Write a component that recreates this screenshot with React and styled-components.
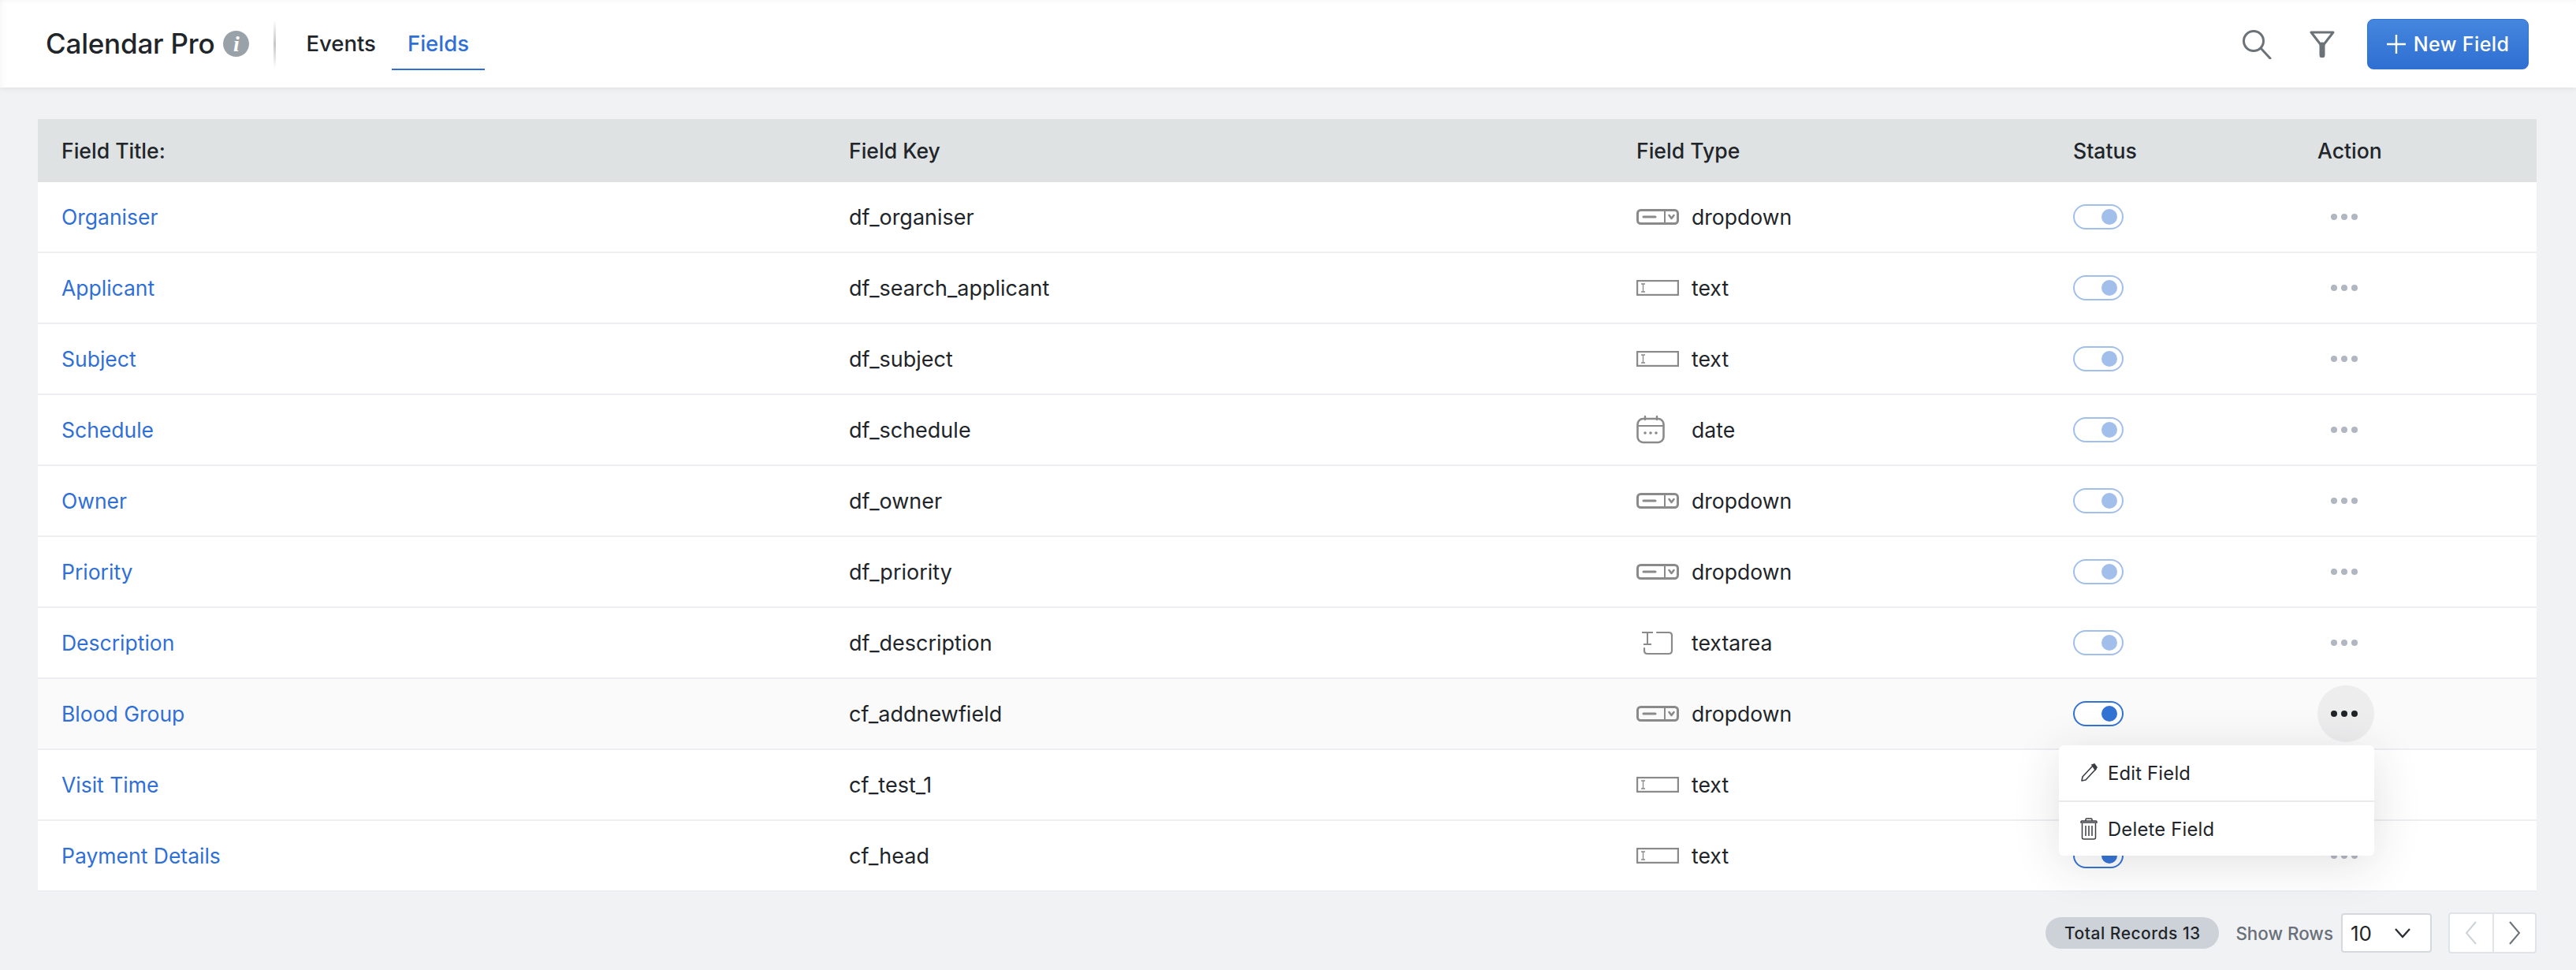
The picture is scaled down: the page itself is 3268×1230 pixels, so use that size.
import * as React from "react";
import styled, { createGlobalStyle } from "styled-components";

const GlobalStyle = createGlobalStyle`
  html, body {
    margin: 0;
    padding: 0;
    background: #f1f2f4;
  }
  body {
    font-family: Inter, "Noto Sans", "Liberation Sans", sans-serif;
    color: #212529;
  }
`;

const Page = styled.div`
  width: 3268px;
  height: 1230px;
  overflow: hidden;
  background: #f1f2f4;
`;

const TopBar = styled.header`
  height: 111px;
  box-sizing: border-box;
  display: flex;
  align-items: center;
  padding: 0 60px 0 58px;
  background: #fff;
  box-shadow: 0 2px 6px rgba(0, 0, 0, 0.07),
    inset 0 8px 8px -8px rgba(0, 0, 0, 0.05),
    inset 12px 0 12px -12px rgba(0, 0, 0, 0.05);
`;

const Title = styled.h1`
  margin: 0;
  font-size: 35px;
  font-weight: 500;
  letter-spacing: -0.2px;
  line-height: 1;
`;

const InfoIcon = styled.span`
  width: 33px;
  height: 33px;
  margin-left: 11px;
  border-radius: 50%;
  background: #99a2a8;
  color: #fff;
  display: flex;
  align-items: center;
  justify-content: center;
  font-family: "Liberation Serif", serif;
  font-style: italic;
  font-weight: 700;
  font-size: 28px;
`;

const Divider = styled.span`
  width: 3px;
  height: 62px;
  margin: 0 18px 0 31px;
  background: linear-gradient(to bottom, #fff, #c4c7c9 50%, #fff);
`;

const Tab = styled.a`
  height: 66px;
  box-sizing: border-box;
  padding: 19px 20px 0;
  display: flex;
  align-items: flex-start;
  font-size: 27.5px;
  font-weight: 500;
  line-height: 1;
  color: ${(p) => (p.$active ? "#2f6fd6" : "#212529")};
  border-bottom: 2px solid ${(p) => (p.$active ? "#2f6fd6" : "transparent")};
`;

const Spacer = styled.div`
  flex: 1;
`;

const ToolIcon = styled.svg`
  display: block;
  margin-right: ${(p) => p.$gap}px;
`;

const NewButton = styled.button`
  width: 205px;
  height: 64px;
  box-sizing: border-box;
  border: 1px solid #3373d4;
  border-radius: 8px;
  background: linear-gradient(to bottom, #4586de, #2f6fd2);
  color: #fff;
  font-family: inherit;
  font-size: 25px;
  font-weight: 500;
  letter-spacing: 0.4px;
  display: flex;
  align-items: center;
  justify-content: center;
  gap: 10px;
  padding: 0;
`;

const Content = styled.main`
  padding: 40px 50px 0 48px;
`;

const Columns = styled.div`
  display: grid;
  grid-template-columns: 1029px 999px 554px 310px 278px;
  align-items: center;
`;

const HeadRow = styled(Columns)`
  height: 80px;
  background: #dfe2e3;
  font-size: 26.6px;
  font-weight: 500;
`;

const HeadCell = styled.div`
  padding-left: ${(p) => (p.$first ? "30px" : "0")};
`;

const Row = styled(Columns)`
  height: 90px;
  box-sizing: border-box;
  border-bottom: 2px solid #eceef2;
  background: ${(p) => (p.$hover ? "#fafafa" : "#fff")};
  font-size: 27px;
  &:last-child {
    border-bottom: 0;
  }
`;

const TitleLink = styled.a`
  padding-left: 30px;
  font-size: 26.5px;
  color: #2f6fd6;
`;

const TypeCell = styled.div`
  display: flex;
  align-items: center;
  font-size: 26.6px;
`;

const TypeIconBox = styled.div`
  width: 70px;
  height: 40px;
  display: flex;
  align-items: center;
  flex: none;
`;

const Toggle = styled.div`
  width: 64px;
  height: 32px;
  box-sizing: border-box;
  border: 2px solid #3373d4;
  border-radius: 16px;
  background: #fff;
  display: flex;
  align-items: center;
  justify-content: flex-end;
  padding-right: 6px;
  opacity: ${(p) => (p.$on ? 1 : 0.45)};
  &::after {
    content: "";
    width: 20px;
    height: 20px;
    border-radius: 50%;
    background: #3373d4;
  }
`;

const ActionCell = styled.div`
  position: relative;
  height: 72px;
  display: flex;
  align-items: center;
`;

const MoreButton = styled.div`
  width: 72px;
  height: 72px;
  border-radius: 50%;
  display: flex;
  align-items: center;
  justify-content: center;
  gap: 5px;
  background: ${(p) => (p.$open ? "#ededee" : "transparent")};
  padding-right: 5px;
  box-sizing: border-box;
`;

const Dot = styled.span`
  width: 8px;
  height: 8px;
  border-radius: 50%;
  background: ${(p) => (p.$open ? "#212529" : "#b1b7c1")};
`;

const Menu = styled.div`
  position: absolute;
  z-index: 2;
  top: 76px;
  right: 206px;
  width: 400px;
  height: 140px;
  background: #fff;
  border-radius: 6px;
  box-shadow: 0 10px 60px rgba(40, 45, 60, 0.14);
  display: grid;
  grid-template-rows: 70px 70px;
`;

const MenuItem = styled.div`
  display: flex;
  align-items: center;
  gap: 13px;
  padding-left: 27px;
  font-size: 23.8px;
  letter-spacing: 0.2px;
  border-top: ${(p) => (p.$split ? "2px solid #e9eaec" : "0")};
`;

const Footer = styled.footer`
  margin-top: 26px;
  display: flex;
  align-items: center;
  justify-content: flex-end;
`;

const TotalPill = styled.div`
  width: 220px;
  height: 40px;
  margin-right: 21px;
  border-radius: 20px;
  background: #cdd2d8;
  display: flex;
  align-items: center;
  justify-content: center;
  font-size: 21px;
  font-weight: 500;
  letter-spacing: 0.5px;
`;

const RowsLabel = styled.div`
  margin-right: 10px;
  color: #697079;
  font-size: 22.4px;
  font-weight: 500;
`;

const RowsSelect = styled.div`
  width: 115px;
  height: 50px;
  box-sizing: border-box;
  margin-right: 21px;
  padding: 0 24px 0 10px;
  border: 2px solid #d5d9de;
  border-radius: 4px;
  background: #fff;
  display: flex;
  align-items: center;
  justify-content: space-between;
  font-size: 26px;
`;

const Pager = styled.div`
  width: 112px;
  height: 52px;
  box-sizing: border-box;
  border: 2px solid #e0e3e7;
  border-radius: 4px;
  background: #fff;
  display: grid;
  grid-template-columns: 1fr 1fr;
`;

const PagerCell = styled.div`
  display: flex;
  align-items: center;
  justify-content: center;
  border-left: ${(p) => (p.$split ? "2px solid #e0e3e7" : "0")};
`;

function SearchIcon() {
  return (
    <ToolIcon $gap={48} width="38" height="38" viewBox="0 0 38 38" fill="none" stroke="#6b7278" strokeWidth="3">
      <circle cx="15" cy="15" r="12.5" />
      <path d="M24 24 L36 37" strokeLinecap="round" />
    </ToolIcon>
  );
}

function FilterIcon() {
  return (
    <ToolIcon $gap={41} width="32" height="34" viewBox="0 0 32 34" fill="none">
      <path d="M2 2 H30 L16 20 Z" stroke="#6b7278" strokeWidth="3" strokeLinejoin="round" />
      <path d="M16 18 V31" stroke="#6b7278" strokeWidth="7" strokeLinecap="round" />
    </ToolIcon>
  );
}

function DropdownIcon() {
  return (
    <svg width="54" height="20" viewBox="0 0 54 20" fill="none" stroke="#8a8a8a">
      <rect x="1.5" y="1.5" width="51" height="17" rx="4" strokeWidth="3" />
      <path d="M36 2 V18" strokeWidth="2" />
      <path d="M9 10 H24" strokeWidth="3" strokeLinecap="round" />
      <path d="M41.5 8 L44.5 12 L47.5 8" strokeWidth="2.6" strokeLinecap="round" strokeLinejoin="round" />
    </svg>
  );
}

function TextIcon() {
  return (
    <svg width="54" height="20" viewBox="0 0 54 20" fill="none" stroke="#8a8a8a">
      <rect x="1" y="1" width="52" height="18" strokeWidth="2.4" />
      <path d="M6 5 H11 M8.5 5 V15 M6 15 H11" strokeWidth="1.3" />
    </svg>
  );
}

function DateIcon() {
  return (
    <svg width="36" height="36" viewBox="0 0 36 36" fill="none" stroke="#8a8a8a">
      <rect x="1.5" y="4" width="33" height="30" rx="7" strokeWidth="2.6" />
      <path d="M2 13 H34" strokeWidth="2" />
      <path d="M11 1 V5 M26 1 V5" strokeWidth="2.4" strokeLinecap="round" />
      <circle cx="11" cy="22" r="1.8" fill="#8a8a8a" stroke="none" />
      <circle cx="18" cy="22" r="1.8" fill="#8a8a8a" stroke="none" />
      <circle cx="25" cy="22" r="1.8" fill="#8a8a8a" stroke="none" />
    </svg>
  );
}

function TextareaIcon() {
  return (
    <svg width="54" height="32" viewBox="0 0 54 32" fill="none" stroke="#8a8a8a" style={{ display: "block" }}>
      <path d="M26 3 H41 Q45 3 45 7 V26 Q45 30 41 30 H14 Q10 30 10 26 V23" strokeWidth="2.2" strokeLinecap="round" />
      <path d="M7 3 H21 M14 3 V18 M9 18 H19" strokeWidth="2" />
    </svg>
  );
}

function PencilIcon() {
  return (
    <svg width="22" height="24" viewBox="0 0 22 24" fill="none" stroke="#3a3d41" strokeWidth="1.6">
      <path d="M2 22 L3 17 L16 3 L20 7 L7 21 Z" strokeLinejoin="round" />
      <path d="M15 2 L18 1 L21 5 L19 8 Z" fill="#3a3d41" />
    </svg>
  );
}

function TrashIcon() {
  return (
    <svg width="22" height="28" viewBox="0 0 22 28" fill="none" stroke="#3a3d41" strokeWidth="1.5" style={{ flex: "none" }}>
      <path d="M1 6 H21 V5 Q21 4 20 4 H2 Q1 4 1 5 Z" />
      <path d="M7 4 V2 Q7 1 8 1 H14 Q15 1 15 2 V4" />
      <path d="M2.5 7 V25 Q2.5 27 4.5 27 H17.5 Q19.5 27 19.5 25 V7" />
      <path d="M7 10 V23 M11 10 V23 M15 10 V23" />
    </svg>
  );
}

const typeIcons = {
  dropdown: <DropdownIcon />,
  text: <TextIcon />,
  date: <DateIcon />,
  textarea: <TextareaIcon />,
};

const fields = [
  { title: "Organiser", key: "df_organiser", type: "dropdown" },
  { title: "Applicant", key: "df_search_applicant", type: "text" },
  { title: "Subject", key: "df_subject", type: "text" },
  { title: "Schedule", key: "df_schedule", type: "date" },
  { title: "Owner", key: "df_owner", type: "dropdown" },
  { title: "Priority", key: "df_priority", type: "dropdown" },
  { title: "Description", key: "df_description", type: "textarea" },
  { title: "Blood Group", key: "cf_addnewfield", type: "dropdown", on: true, open: true },
  { title: "Visit Time", key: "cf_test_1", type: "text", on: true },
  { title: "Payment Details", key: "cf_head", type: "text", on: true },
];

export default function App() {
  return (
    <Page>
      <GlobalStyle />
      <TopBar>
        <Title>Calendar Pro</Title>
        <InfoIcon>i</InfoIcon>
        <Divider />
        <Tab>Events</Tab>
        <Tab $active>Fields</Tab>
        <Spacer />
        <SearchIcon />
        <FilterIcon />
        <NewButton>
          <svg width="24" height="24" viewBox="0 0 24 24" stroke="#fff" strokeWidth="2.4">
            <path d="M12 0 V24 M0 12 H24" />
          </svg>
          New Field
        </NewButton>
      </TopBar>
      <Content>
        <HeadRow>
          <HeadCell $first>Field Title:</HeadCell>
          <HeadCell>Field Key</HeadCell>
          <HeadCell>Field Type</HeadCell>
          <HeadCell>Status</HeadCell>
          <HeadCell>Action</HeadCell>
        </HeadRow>
        {fields.map((f) => (
          <Row key={f.title} $hover={f.open}>
            <TitleLink>{f.title}</TitleLink>
            <div>{f.key}</div>
            <TypeCell>
              <TypeIconBox>{typeIcons[f.type]}</TypeIconBox>
              {f.type}
            </TypeCell>
            <Toggle $on={f.on} />
            <ActionCell>
              <MoreButton $open={f.open}>
                <Dot $open={f.open} />
                <Dot $open={f.open} />
                <Dot $open={f.open} />
              </MoreButton>
              {f.open && (
                <Menu>
                  <MenuItem>
                    <PencilIcon />
                    Edit Field
                  </MenuItem>
                  <MenuItem $split>
                    <TrashIcon />
                    Delete Field
                  </MenuItem>
                </Menu>
              )}
            </ActionCell>
          </Row>
        ))}
        <Footer>
          <TotalPill>Total Records 13</TotalPill>
          <RowsLabel>Show Rows</RowsLabel>
          <RowsSelect>
            10
            <svg width="22" height="14" viewBox="0 0 22 14" fill="none" stroke="#2b2f33" strokeWidth="2.4">
              <path d="M2 2 L11 12 L20 2" />
            </svg>
          </RowsSelect>
          <Pager>
            <PagerCell>
              <svg width="16" height="32" viewBox="0 0 16 32" fill="none" stroke="#ced3d8" strokeWidth="2">
                <path d="M14 2 L2 16 L14 30" />
              </svg>
            </PagerCell>
            <PagerCell $split>
              <svg width="16" height="32" viewBox="0 0 16 32" fill="none" stroke="#6b7278" strokeWidth="2">
                <path d="M2 2 L14 16 L2 30" />
              </svg>
            </PagerCell>
          </Pager>
        </Footer>
      </Content>
    </Page>
  );
}
